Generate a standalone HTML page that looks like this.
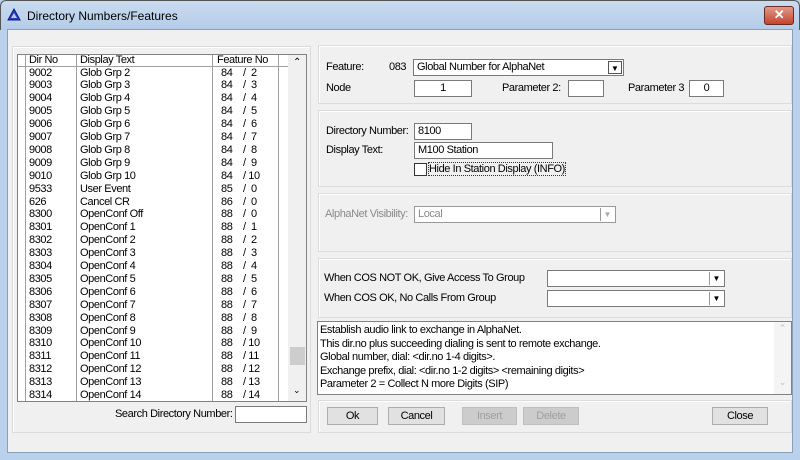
<!DOCTYPE html>
<html><head><style>
*{box-sizing:border-box;margin:0;padding:0}
body{width:800px;height:460px;background:#b9d1ea;font-family:"Liberation Sans",sans-serif;font-size:11px;letter-spacing:-0.4px;color:#000;position:relative;overflow:hidden}
.abs{position:absolute}
#title{left:0;top:0;width:800px;height:30px;background:linear-gradient(#c9dbef,#b4cce8);border:1px solid #555;border-bottom:none;border-radius:6px 6px 0 0}
#client{left:7px;top:29px;width:786px;height:424px;background:#f0f0f0;border:1px solid #8aa0b8}
.grp{position:absolute;border:1px solid #dcdcdc;box-shadow:inset 1px 1px 0 #fff}
.in{position:absolute;background:#fff;border:1px solid #7a7a7a;height:17px;padding:1px 3px;font-size:11px;line-height:13px}
.btn{position:absolute;background:#e1e1e1;border:1px solid #adadad;height:18px;text-align:center;line-height:16px}
.dis{color:#a0a0a0;background:#ccc;border-color:#bfbfbf}
.row{position:absolute;left:0;height:13px;line-height:13px;white-space:nowrap}
.row span{position:absolute}
.t{position:absolute;white-space:nowrap}
.dd{position:absolute;right:1px;top:1px;width:14px;height:13px;border-left:1px solid #999;font-size:8px;text-align:center;line-height:13px;letter-spacing:0}
</style></head><body>
<div id="title" class="abs">
<svg class="abs" style="left:6px;top:7px" width="14" height="13"><polygon points="7,1 13,12 1,12" fill="#2a3fc0" stroke="#0a1a80"/><polygon points="7,5 10,10 4,10" fill="#b8c8ff"/></svg>
<div class="t" style="left:26px;top:8px;font-size:12px;letter-spacing:0">Directory Numbers/Features</div>
<div class="abs" style="left:763px;top:5px;width:30px;height:19px;background:linear-gradient(#e09a8a,#c4452e);border:1px solid #6b2a20;border-radius:3px;color:#fff;font-weight:bold;text-align:center;line-height:16px;font-size:13px">✕</div>
</div>
<div id="client" class="abs"></div>

<div class="grp" style="left:12px;top:46px;width:299px;height:387px"></div>
<div class="abs" style="left:17px;top:54px;width:290px;height:348px;background:#fff;border:1px solid #828282;overflow:hidden">
<div class="abs" style="left:0;top:0;width:270px;height:12px;border-bottom:1px solid #a0a0a0"></div>
<div class="abs" style="left:7px;top:0;width:1px;height:348px;background:#a0a0a0"></div>
<div class="abs" style="left:58px;top:0;width:1px;height:348px;background:#a0a0a0"></div>
<div class="abs" style="left:194px;top:0;width:1px;height:348px;background:#a0a0a0"></div>
<div class="abs" style="left:260px;top:0;width:1px;height:348px;background:#a0a0a0"></div>
<div class="row" style="top:-1px"><span style="left:11px">Dir No</span><span style="left:62px">Display Text</span><span style="left:199px">Feature No</span></div>
<div id="rows"></div>
<div class="abs" style="left:270px;top:0;width:18px;height:346px;background:#f0f0f0"></div>
<div class="t" style="left:275px;top:2px;font-size:10px">⌃</div>
<div class="t" style="left:275px;top:330px;font-size:9px">⌄</div>
<div class="abs" style="left:272px;top:292px;width:15px;height:18px;background:#cdcdcd"></div>
</div>
<div class="t" style="left:115px;top:408px">Search Directory Number:</div>
<div class="in" style="left:235px;top:406px;width:72px"></div>

<div class="grp" style="left:318px;top:45px;width:474px;height:59px"></div>
<div class="t" style="left:326px;top:61px">Feature:</div>
<div class="t" style="left:389px;top:61px">083</div>
<div class="in" style="left:413px;top:59px;width:211px">Global Number for AlphaNet<div class="dd" style="border:1px solid #555;right:1px">▼</div></div>
<div class="t" style="left:326px;top:82px">Node</div>
<div class="in" style="left:414px;top:80px;width:58px;text-align:center">1</div>
<div class="t" style="left:502px;top:82px">Parameter 2:</div>
<div class="in" style="left:568px;top:80px;width:36px"></div>
<div class="t" style="left:628px;top:82px">Parameter 3</div>
<div class="in" style="left:689px;top:80px;width:35px;text-align:center">0</div>

<div class="grp" style="left:318px;top:110px;width:474px;height:77px"></div>
<div class="t" style="left:326px;top:125px">Directory Number:</div>
<div class="in" style="left:414px;top:123px;width:58px">8100</div>
<div class="t" style="left:326px;top:144px">Display Text:</div>
<div class="in" style="left:414px;top:142px;width:139px">M100 Station</div>
<div class="abs" style="left:414px;top:163px;width:13px;height:13px;background:#fff;border:1px solid #333"></div>
<div class="t" style="left:429px;top:163px;outline:1px dotted #333">Hide In Station Display (INFO)</div>

<div class="grp" style="left:318px;top:193px;width:474px;height:59px"></div>
<div class="t" style="left:325px;top:208px;color:#8a8a8a">AlphaNet Visibility:</div>
<div class="in" style="left:414px;top:206px;width:202px;color:#8a8a8a;border-color:#999">Local<div class="dd" style="color:#aaa">▼</div></div>

<div class="grp" style="left:318px;top:258px;width:474px;height:60px"></div>
<div class="t" style="left:324px;top:272px">When COS NOT OK, Give Access To Group</div>
<div class="in" style="left:547px;top:270px;width:178px"><div class="dd">▼</div></div>
<div class="t" style="left:324px;top:292px">When COS OK, No Calls From Group</div>
<div class="in" style="left:547px;top:290px;width:178px"><div class="dd">▼</div></div>

<div class="abs" style="left:317px;top:321px;width:475px;height:74px;background:#fff;border:1px solid #828282;line-height:13.5px;padding:2px 2px 0">
Establish audio link to exchange in AlphaNet.<br>This dir.no plus succeeding dialing is sent to remote exchange.<br>Global number, dial: &lt;dir.no 1-4 digits&gt;.<br>Exchange prefix, dial: &lt;dir.no 1-2 digits&gt; &lt;remaining digits&gt;<br>Parameter 2 = Collect N more Digits (SIP)
<div class="abs" style="right:0;top:0;width:17px;height:72px;background:#f4f4f4;color:#bbb;font-size:9px;text-align:center">⌃<br><br><br><br>⌄</div>
</div>

<div class="grp" style="left:318px;top:400px;width:474px;height:33px"></div>
<div class="btn" style="left:327px;top:407px;width:51px">Ok</div>
<div class="btn" style="left:388px;top:407px;width:57px">Cancel</div>
<div class="btn dis" style="left:462px;top:407px;width:55px">Insert</div>
<div class="btn dis" style="left:523px;top:407px;width:56px">Delete</div>
<div class="btn" style="left:712px;top:407px;width:56px">Close</div>

<script>
var d=[["9002","Glob Grp 2",84,2],["9003","Glob Grp 3",84,3],["9004","Glob Grp 4",84,4],["9005","Glob Grp 5",84,5],["9006","Glob Grp 6",84,6],["9007","Glob Grp 7",84,7],["9008","Glob Grp 8",84,8],["9009","Glob Grp 9",84,9],["9010","Glob Grp 10",84,10],["9533","User Event",85,0],["626","Cancel CR",86,0],["8300","OpenConf Off",88,0]];
for(var i=1;i<=14;i++)d.push([String(8300+i),"OpenConf "+i,88,i]);
var h="";d.forEach(function(r,i){h+='<div class="row" style="top:'+(11.5+i*12.9)+'px"><span style="left:11px">'+r[0]+'</span><span style="left:62px">'+r[1]+'</span><span style="left:203px">'+r[2]+'</span><span style="left:225px">/ '+(r[3]<10?'&nbsp;':'')+r[3]+'</span></div>';});
document.getElementById("rows").innerHTML=h;
</script>
</body></html>
